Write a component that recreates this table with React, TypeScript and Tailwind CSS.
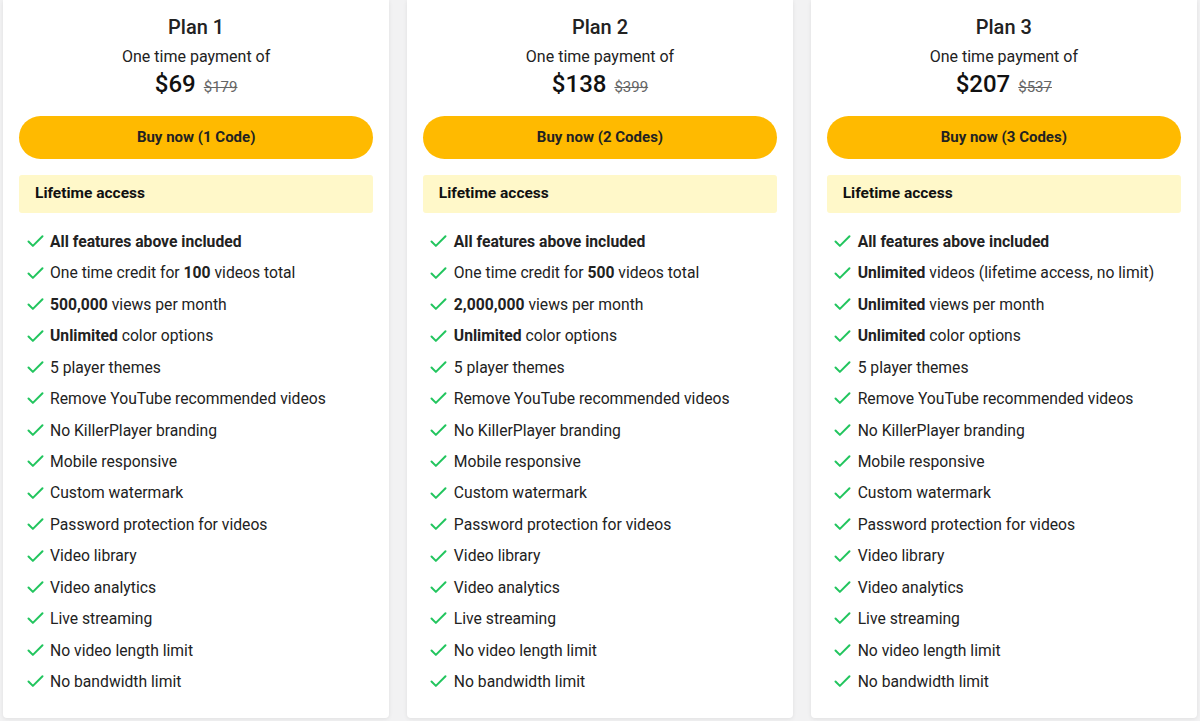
import React from "react";
import { Check } from "lucide-react";

const plans = [
  {
    name: "Plan 1",
    price: "$69",
    was: "$179",
    cta: "Buy now (1 Code)",
    top: [
      <><b className="font-bold">All features above included</b></>,
      <>One time credit for <b className="font-bold">100</b> videos total</>,
      <><b className="font-bold">500,000</b> views per month</>,
    ],
  },
  {
    name: "Plan 2",
    price: "$138",
    was: "$399",
    cta: "Buy now (2 Codes)",
    top: [
      <><b className="font-bold">All features above included</b></>,
      <>One time credit for <b className="font-bold">500</b> videos total</>,
      <><b className="font-bold">2,000,000</b> views per month</>,
    ],
  },
  {
    name: "Plan 3",
    price: "$207",
    was: "$537",
    cta: "Buy now (3 Codes)",
    top: [
      <><b className="font-bold">All features above included</b></>,
      <><b className="font-bold">Unlimited</b> videos (lifetime access, no limit)</>,
      <><b className="font-bold">Unlimited</b> views per month</>,
    ],
  },
];

// same list on every plan after the first three rows
const shared = [
  <><b className="font-bold">Unlimited</b> color options</>,
  <>5 player themes</>,
  <>Remove YouTube recommended videos</>,
  <>No KillerPlayer branding</>,
  <>Mobile responsive</>,
  <>Custom watermark</>,
  <>Password protection for videos</>,
  <>Video library</>,
  <>Video analytics</>,
  <>Live streaming</>,
  <>No video length limit</>,
  <>No bandwidth limit</>,
];

function PlanCard({ plan }: { plan: (typeof plans)[number] }) {
  const items = [...plan.top, ...shared];
  return (
    <div className="flex-1 bg-white rounded-b-[4px] shadow-[0_1px_4px_rgba(0,0,0,0.08)] px-4 pt-[13px] pb-[20px]">
      <h3 className="text-center text-[20px] leading-[28px] font-medium text-[#222]">
        {plan.name}
      </h3>
      <p className="mt-[5px] text-center text-[16px] leading-[22px] text-[#222]">
        One time payment of
      </p>
      <div className="h-[32px] flex items-baseline justify-center gap-[8px] leading-[32px]">
        <span className="text-[24px] font-medium text-[#111]">{plan.price}</span>
        <span className="text-[15px] text-[#666] line-through">{plan.was}</span>
      </div>
      <button className="mt-[16px] w-full h-[43px] rounded-full bg-[#ffba00] text-[15px] font-bold text-[#222]">
        {plan.cta}
      </button>
      <div className="mt-[16px] h-[38px] rounded-[3px] bg-[#fff8c9] flex items-center px-4 text-[15.5px] font-bold text-[#111]">
        Lifetime access
      </div>
      <ul className="mt-[13px]">
        {items.map((item, i) => (
          <li key={i} className="h-[31.45px] flex items-center gap-[4.5px] pl-[5.5px] text-[15.7px] text-[#222]">
            <Check className="w-[21px] h-[21px] text-[#22c55e] shrink-0" strokeWidth={2.3} />
            <span>{item}</span>
          </li>
        ))}
      </ul>
    </div>
  );
}

export default function App() {
  return (
    <main
      className="min-h-screen bg-[#f2f2f3] px-[3px]"
      style={{ fontFamily: "Roboto, 'Liberation Sans', sans-serif" }}
    >
      <div className="flex gap-[17.5px] items-start">
        {plans.map((p) => (
          <PlanCard key={p.name} plan={p} />
        ))}
      </div>
    </main>
  );
}
